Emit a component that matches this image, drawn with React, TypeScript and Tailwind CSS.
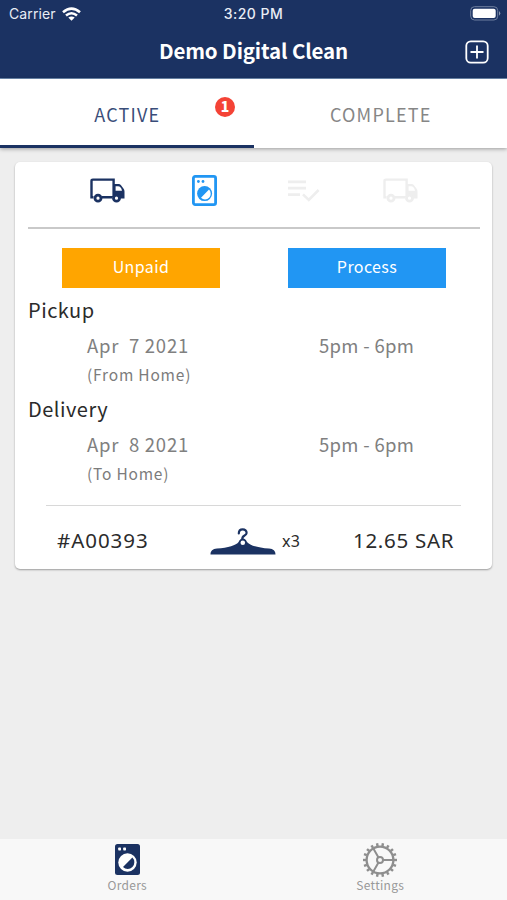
import React from "react";

const SOURCE = "font-['Noto_Sans_CJK_SC','Noto_Sans',sans-serif]";
const ROUND = "font-['Noto_Sans',sans-serif]";

function Truck({ className = "" }: { className?: string }) {
  return (
    <svg className={`ml-px h-[25px] w-[35px] ${className}`} viewBox="0 0 35 25" fill="none" stroke="currentColor">
      <path d="M3.5 19.2H1.5V3Q1.5 1.6 2.9 1.6H23.6V19M12 19.2H22.5" strokeWidth="2.4" />
      <path
        fillRule="evenodd"
        stroke="none"
        fill="currentColor"
        d="M24 5.9H28.6Q30 5.9 31 7.2L33.6 10.8Q34.5 12 34.5 13.6V20.4H24ZM25.6 8.2V12.8H32Q31.2 8.2 28 8.2Z"
      />
      <circle cx="8" cy="20.2" r="3" fill="#fff" strokeWidth="2.8" />
      <circle cx="26.5" cy="20.2" r="3" fill="#fff" strokeWidth="2.8" />
    </svg>
  );
}

function Washer() {
  return (
    <svg className="h-[31px] w-[25px] text-[#2196f3]" viewBox="0 0 25 31" fill="none">
      <rect x="1.4" y="1.4" width="22.2" height="28.2" rx="1.8" stroke="currentColor" strokeWidth="2.8" />
      <circle cx="6.4" cy="6.5" r="1.4" fill="currentColor" />
      <circle cx="11" cy="6.5" r="1.4" fill="currentColor" />
      <circle cx="12.6" cy="18.6" r="7.5" fill="currentColor" />
      <path d="M17 14.6A5.6 5.6 0 0 1 9 22.8Z" fill="#fff" />
    </svg>
  );
}

function WasherSolid() {
  return (
    <svg className="ml-px h-[31px] w-[25px] text-[#1b3262]" viewBox="0 0 25 31">
      <rect width="25" height="31" rx="2.5" fill="currentColor" />
      <rect x="3.2" y="3.6" width="2.8" height="2.8" rx=".7" fill="#fff" />
      <rect x="8.2" y="3.6" width="2.8" height="2.8" rx=".7" fill="#fff" />
      <circle cx="12.5" cy="18.5" r="9.2" fill="#fff" />
      <path d="M17.4 13.6A6.4 6.4 0 0 1 8 23Z" fill="currentColor" />
    </svg>
  );
}

function ListCheck() {
  return (
    <svg className="ml-[3px] h-[22px] w-[32px] text-[#eeeeee]" viewBox="0 0 32 22" fill="none" stroke="currentColor" strokeWidth="2.6">
      <path d="M0 1.9H18M0 8.1H18M0 14.6H12M15 14.4L20.8 20L30.6 10" />
    </svg>
  );
}

function Hanger() {
  return (
    <svg className="mt-[8px] ml-px h-[28px] w-[66px] text-[#1b3262]" viewBox="0 0 66 28">
      <path
        d="M28.8 5.5C28.8 2.8 30.5 1.3 32.7 1.3C35 1.3 36.6 3 36.6 5C36.6 8 31.4 7 32.4 11.5"
        fill="none"
        stroke="currentColor"
        strokeWidth="2.2"
        strokeLinecap="round"
      />
      <path
        fill="currentColor"
        d="M32.8 10.5C35 10.5 36 12 37 14C39.5 17.5 48 19.6 59 20.6C63.5 21 65.5 23 65.5 26.6H.5C.5 23 2.5 21 7 20.6C18 19.6 26.3 17.5 28.6 14C29.6 12 30.6 10.5 32.8 10.5Z"
      />
      <circle cx="32.8" cy="14.8" r="2.3" fill="#fff" />
    </svg>
  );
}

const TEETH = Array.from({ length: 18 }, (_, i) => i * 20);

function Gear() {
  return (
    <svg className="h-[34px] w-[34px] text-[#8e8e8e]" viewBox="-17 -17 34 34" fill="none" stroke="currentColor">
      <circle r="13.4" strokeWidth="2.3" />
      {TEETH.map((angle) => (
        <path key={angle} d="M14 0H17" strokeWidth="2.4" transform={`rotate(${angle})`} />
      ))}
      <circle r="3" strokeWidth="2" />
      <path d="M3 0H13.5M-1.5 2.6L-6.8 11.7M-1.5 -2.6L-6.8 -11.7" strokeWidth="2" />
    </svg>
  );
}

function Slot({ title, date, place }: { title: string; date: string; place: string }) {
  return (
    <section className={`h-[99px] ${SOURCE}`}>
      <h2 className="ml-[13px] h-9 text-[20px] leading-[38px] tracking-[0.5px] text-[#2b2b2b]">{title}</h2>
      <div className="flex h-9 text-[18.5px] leading-9 whitespace-pre text-[#808080]">
        <span className="ml-[72px] w-[232px] tracking-[0.75px]">{date}</span>
        <span className="tracking-[0.3px]">5pm - 6pm</span>
      </div>
      <p className="ml-[72px] h-[27px] text-[15.5px] leading-[22px] tracking-[0.8px] text-[#7c7c7c]">{place}</p>
    </section>
  );
}

export default function App() {
  return (
    <div className="flex h-[900px] w-[507px] flex-col overflow-hidden bg-[#eeeeee]">
      <header className="h-[79px] shrink-0 border-b border-[#6f8bb0] bg-[#1b3262] text-white">
        <div className="grid h-[27px] grid-cols-3 items-center pr-[6px] pl-[9px] font-['Inter',sans-serif] text-[14px] text-[#e9edf5]">
          <div className="flex items-center gap-[6px]">
            <span className="tracking-[0.1px]">Carrier</span>
            <svg className="h-[14px] w-[19px]" viewBox="0 0 19 14" fill="none" stroke="#fff" strokeWidth="2.6">
              <path d="M1 5.2Q9.5 -2 18 5.2M4 8.5Q9.5 4 15 8.5" />
              <path d="M6.3 10.6Q9.5 8.2 12.7 10.6L9.5 13.8Z" fill="#fff" stroke="none" />
            </svg>
          </div>
          <span className="-ml-[3px] text-center font-medium tracking-[0.45px]">3:20 PM</span>
          <svg className="h-[15px] w-[31px] justify-self-end" viewBox="0 0 31 15">
            <rect x=".7" y=".7" width="27" height="13.3" rx="3.8" fill="none" stroke="#6f7f9f" />
            <rect x="2.7" y="2.7" width="23" height="9.3" rx="2" fill="#fff" />
            <path d="M29 5Q31.5 7.3 29 9.8Z" fill="#8d9ab3" />
          </svg>
        </div>
        <div className="grid h-[50px] grid-cols-[1fr_auto_1fr] items-center">
          <h1 className={`col-start-2 -mt-[5px] text-[20.5px] leading-8 font-bold tracking-[-0.12px] ${SOURCE}`}>Demo Digital Clean</h1>
          <svg className="col-start-3 mr-[18px] h-6 w-6 justify-self-end" viewBox="0 0 24 24" fill="none" stroke="#fff" strokeWidth="1.8">
            <rect x="1.3" y="1.3" width="21.4" height="21.4" rx="4.5" />
            <path d="M12 5.5V18.5M5.5 12H18.5" />
          </svg>
        </div>
      </header>

      <nav className={`grid h-[69px] shrink-0 grid-cols-2 bg-white text-center text-[18px] leading-[71px] tracking-[1.2px] shadow-[0_1px_4px_rgba(0,0,0,0.35)] ${SOURCE}`}>
        <div className="relative h-[69px] border-b-[3px] border-[#1b3262] pl-px text-[#394d79]">
          ACTIVE
          <span className="absolute top-[18px] left-[215px] h-5 w-5 rounded-full bg-[#f44336] text-[14px] leading-[19px] font-black tracking-normal text-white">
            1
          </span>
        </div>
        <div className="h-[69px] pl-px text-[#868686]">COMPLETE</div>
      </nav>

      <main className="mx-[15px] mt-[14px] flex h-[407px] w-[477px] flex-col rounded-[5px] bg-white shadow-[0_1px_2px_rgba(0,0,0,0.35)]">
        <div className="mx-[43px] grid h-[57px] grid-cols-4 items-center justify-items-center">
          <Truck className="text-[#1b3262]" />
          <Washer />
          <ListCheck />
          <Truck className="text-[#eeeeee]" />
        </div>
        <div className="mt-2 mr-3 ml-[13px] h-[2px] shrink-0 bg-[#c9c9c9]" />
        <div className={`mt-[19px] ml-[47px] flex h-10 shrink-0 gap-[68px] text-center text-[16px] leading-[36px] tracking-[0.4px] text-white ${SOURCE}`}>
          <div className="w-[158px] bg-[#ffa500]">Unpaid</div>
          <div className="w-[158px] bg-[#2196f3]">Process</div>
        </div>
        <div className="mt-[3px]">
          <Slot title="Pickup" date="Apr  7 2021" place="(From Home)" />
          <Slot title="Delivery" date="Apr  8 2021" place="(To Home)" />
        </div>
        <div className="mx-[31px] mt-4 h-px shrink-0 bg-[#d8d8d8]" />
        <div className={`flex h-[63px] items-center text-[20.5px] tracking-[0.95px] text-[#2b2b2b] ${ROUND}`}>
          <span className="ml-[42px] w-[152px] pt-[5px]">#A00393</span>
          <Hanger />
          <span className="ml-[6px] w-[71px] pt-[7px] text-[16px] tracking-[0.3px]">x3</span>
          <span className="pt-[5px] tracking-[0.7px] whitespace-nowrap">12.65 SAR</span>
        </div>
      </main>

      <footer className={`mt-auto grid h-[61px] grid-cols-2 justify-items-center bg-[#f8f8f8] text-[12px] leading-[18px] tracking-[0.3px] text-[#999] ${SOURCE}`}>
        <div className="flex flex-col items-center pt-[5px]">
          <WasherSolid />
          <span className="pt-px pl-px">Orders</span>
        </div>
        <div className="flex flex-col items-center pt-[4px]">
          <Gear />
          <span className="-mt-px">Settings</span>
        </div>
      </footer>
    </div>
  );
}
